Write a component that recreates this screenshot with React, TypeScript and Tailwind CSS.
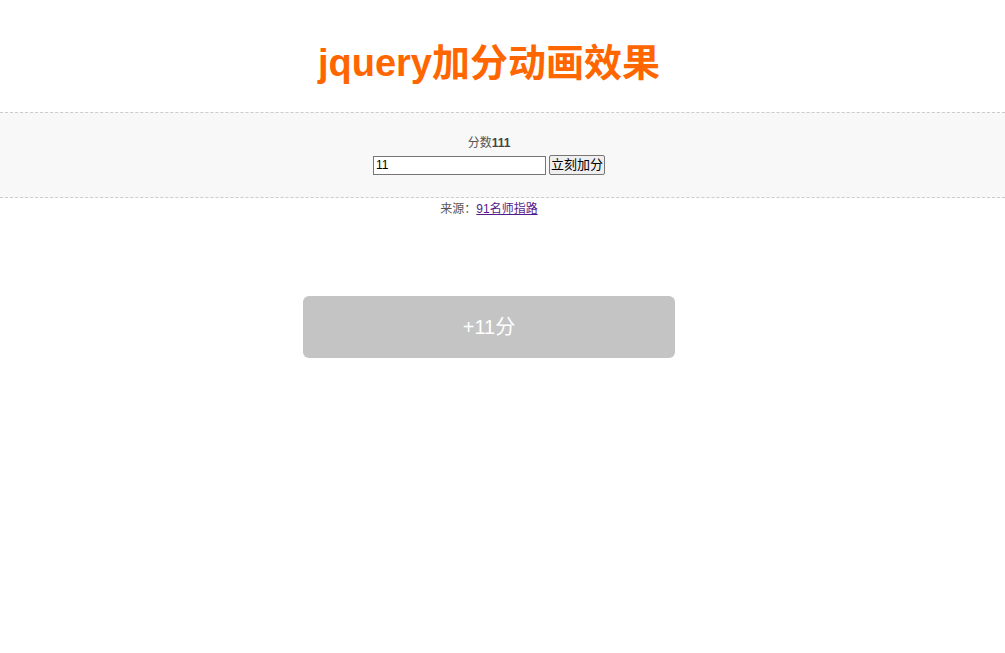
export default function App() {
  const cjk = {
    fontFamily:
      '"Liberation Sans", Arial, "Noto Sans CJK SC", sans-serif',
  };

  return (
    <div className="min-h-[653px] bg-white" style={cjk}>
      {/* Title */}
      <h1 className="w-[978px] pt-[40px] pb-[26px] text-center text-[38px] leading-[46px] font-bold text-[#ff6600]">
        jquery加分动画效果
      </h1>

      {/* Score panel */}
      <div className="border-y border-dashed border-[#cccccc] bg-[#f8f8f8] pt-[21px] pb-[22px]">
        <div className="w-[978px] text-center">
          <div className="text-[12px] leading-[18px] text-[#555555]">
            分数<b className="text-[#444444]">111</b>
          </div>
          <div className="mt-[3px] flex items-center justify-center gap-[3px]">
            <input
              defaultValue="11"
              className="h-[19px] w-[173px] border border-[#767676] bg-white px-[2px] text-[12px] text-black outline-none"
            />
            <button className="h-[20px] rounded-[2px] border border-[#767676] bg-[#efefef] px-[1px] text-[13px] leading-[16px] text-black">
              立刻加分
            </button>
          </div>
        </div>
      </div>

      {/* Source */}
      <div className="w-[978px] pt-[2px] text-center text-[12px] leading-[18px] text-[#555555]">
        来源：
        <a href="#" className="text-[#551a8b] underline">
          91名师指路
        </a>
      </div>

      {/* Floating score */}
      <div className="mt-[78px] flex w-[978px] justify-center">
        <div className="flex h-[62px] w-[372px] items-center justify-center rounded-[6px] bg-[#c4c4c4] text-[20px] text-white">
          +11分
        </div>
      </div>
    </div>
  );
}
